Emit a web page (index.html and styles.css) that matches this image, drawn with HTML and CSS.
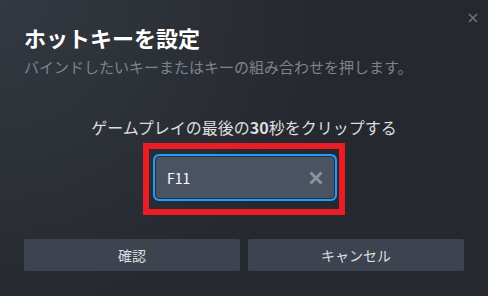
FILE: index.html
```html
<!DOCTYPE html>
<html lang="ja">
<head>
<meta charset="utf-8">
<link rel="stylesheet" href="styles.css">
</head>
<body>
<div class="dialog">
  <button class="close" aria-label="閉じる">
    <svg width="10" height="10" viewBox="0 0 10 10"><path d="M1 1L9 9M9 1L1 9" stroke="#6b7480" stroke-width="1.6" fill="none"/></svg>
  </button>
  <h1 class="title">ホットキーを設定</h1>
  <p class="subtitle">バインドしたいキーまたはキーの組み合わせを押します。</p>
  <div class="body">
    <p class="prompt">ゲームプレイの最後の<b>30</b>秒をクリップする</p>
    <div class="highlight">
      <div class="keyinput">
        <span class="keyname">F11</span>
        <svg class="clear" width="16" height="16" viewBox="0 0 16 16"><path d="M2.5 2.5L13.5 13.5M13.5 2.5L2.5 13.5" stroke="#8b929b" stroke-width="3" fill="none"/></svg>
      </div>
    </div>
  </div>
  <div class="actions">
    <button class="btn">確認</button>
    <button class="btn">キャンセル</button>
  </div>
</div>
</body>
</html>
```

FILE: styles.css
```css
html, body {
  margin: 0;
  padding: 0;
  width: 488px;
  height: 296px;
  overflow: hidden;
}
body {
  font-family: "Noto Sans CJK JP", "Noto Sans", sans-serif;
  background: #25282e;
}
.dialog {
  position: relative;
  box-sizing: border-box;
  width: 488px;
  height: 296px;
  padding: 23px 24px 0;
  background:
    radial-gradient(circle at top left, rgba(74, 81, 92, 0.4) 0%, rgba(75, 81, 92, 0) 60%),
    #25282e;
}
.close {
  position: absolute;
  top: 12px;
  right: 9px;
  width: 12px;
  height: 12px;
  padding: 1px;
  border: 0;
  background: none;
  display: flex;
}
.title {
  margin: 0;
  font-size: 22px;
  line-height: 28px;
  font-weight: 700;
  color: #ffffff;
}
.subtitle {
  margin: 6px 0 0;
  font-size: 15px;
  line-height: 20px;
  color: #7d848e;
}
.body {
  display: flex;
  flex-direction: column;
  align-items: center;
  margin-top: 39px;
}
.prompt {
  margin: 0;
  font-size: 16px;
  line-height: 22px;
  color: #dcdedf;
}
.prompt b {
  font-weight: 700;
}
.highlight {
  margin-top: 5px;
  border: 6px solid #ec1c24;
  padding: 7px 4px 10px 6px;
}
.keyinput {
  box-sizing: border-box;
  width: 180px;
  height: 43px;
  border: 1px solid #2b2f37;
  border-radius: 4px;
  box-shadow: 0 0 0 2px #1a9fff;
  background: #4b5363;
  display: flex;
  align-items: center;
  justify-content: space-between;
  padding: 0 10px 0 11px;
}
.keyname {
  font-size: 14px;
  color: #ffffff;
}
.actions {
  display: flex;
  gap: 8px;
  margin-top: 24px;
}
.btn {
  flex: 1;
  height: 32px;
  border: 0;
  border-radius: 2px;
  background: #3d4450;
  color: #dcdedf;
  font-family: inherit;
  font-size: 14px;
  padding: 0;
}
```
